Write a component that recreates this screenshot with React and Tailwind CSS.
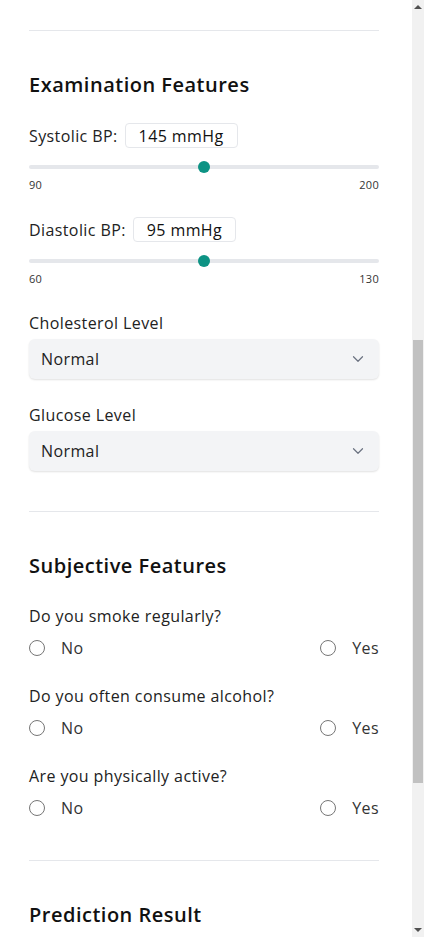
import React from 'react';
import { ChevronDown } from 'lucide-react';

const font = "font-['Open_Sans',sans-serif]";
const body = 'text-[16px] leading-6 tracking-[0.4px]';
const heading = 'text-[20px] leading-7 font-semibold tracking-[0.5px] text-[#111]';

function RangeField({ label, value, unit, min, max }) {
    const pct = ((value - min) / (max - min)) * 100;
    return (
        <div>
            <div className="flex items-center gap-[7px]">
                <span className={`${body} text-[#222]`}>{label}</span>
                <span className={`h-[25px] flex items-center px-[13px] border border-[#e5e7eb] rounded ${body} text-[#111]`}>
                    {value} {unit}
                </span>
            </div>
            <div className="mt-[13px] h-3 relative flex items-center">
                <div className="h-1 w-full rounded-full bg-[#e5e7eb]" />
                <div
                    className="absolute w-3 h-3 rounded-full bg-[#0d9384] -translate-x-1/2"
                    style={{ left: `${pct}%` }}
                />
            </div>
            <div className="mt-1 flex justify-between text-[11px] leading-4 text-[#333] tracking-[0.3px]">
                <span>{min}</span>
                <span>{max}</span>
            </div>
        </div>
    );
}

function SelectField({ label }) {
    return (
        <div>
            <div className={`${body} text-[#222] mb-1`}>{label}</div>
            <div className="h-10 flex items-center justify-between pl-3 pr-3 bg-[#f3f4f6] rounded-md shadow-[0_1px_2px_rgba(0,0,0,0.12)]">
                <span className={`${body} text-[#222]`}>Normal</span>
                <ChevronDown size={18} strokeWidth={1.6} className="text-[#6b7280]" />
            </div>
        </div>
    );
}

function Radio({ text }) {
    return (
        <div className="flex items-center gap-4">
            <span className="w-4 h-4 rounded-full border border-[#767676] bg-white" />
            <span className={`${body} text-[#333]`}>{text}</span>
        </div>
    );
}

function Question({ text }) {
    return (
        <div>
            <div className={`${body} text-[#222]`}>{text}</div>
            <div className="mt-2 flex items-center justify-between">
                <Radio text="No" />
                <Radio text="Yes" />
            </div>
        </div>
    );
}

export default function App() {
    return (
        <div className={`h-[937px] w-[424px] flex bg-white overflow-hidden ${font}`}>
            <main className="w-[412px] pl-[29px] pr-[33px] pt-[30px] overflow-hidden">
                <section className="border-t border-[#e5e7eb] pt-10 pb-10">
                    <h2 className={`${heading} mb-6`}>Examination Features</h2>
                    <div className="flex flex-col gap-6">
                        <RangeField label="Systolic BP:" value={145} unit="mmHg" min={90} max={200} />
                        <RangeField label="Diastolic BP:" value={95} unit="mmHg" min={60} max={130} />
                        <SelectField label="Cholesterol Level" />
                        <SelectField label="Glucose Level" />
                    </div>
                </section>
                <section className="border-t border-[#e5e7eb] pt-10 pb-10">
                    <h2 className={`${heading} mb-6`}>Subjective Features</h2>
                    <div className="flex flex-col gap-6">
                        <Question text="Do you smoke regularly?" />
                        <Question text="Do you often consume alcohol?" />
                        <Question text="Are you physically active?" />
                    </div>
                </section>
                <section className="border-t border-[#e5e7eb] pt-10">
                    <h2 className={heading}>Prediction Result</h2>
                </section>
            </main>
            <div className="w-3 h-full bg-[#f1f1f1] flex flex-col items-center">
                <div className="h-[14px] flex items-center justify-center">
                    <span className="w-0 h-0 border-l-4 border-r-4 border-b-4 border-l-transparent border-r-transparent border-b-[#505050]" />
                </div>
                <div className="h-[326px]" />
                <div className="w-[10px] h-[443px] bg-[#c1c1c1]" />
                <div className="flex-1" />
                <div className="h-[14px] flex items-center justify-center">
                    <span className="w-0 h-0 border-l-4 border-r-4 border-t-4 border-l-transparent border-r-transparent border-t-[#505050]" />
                </div>
            </div>
        </div>
    );
}
